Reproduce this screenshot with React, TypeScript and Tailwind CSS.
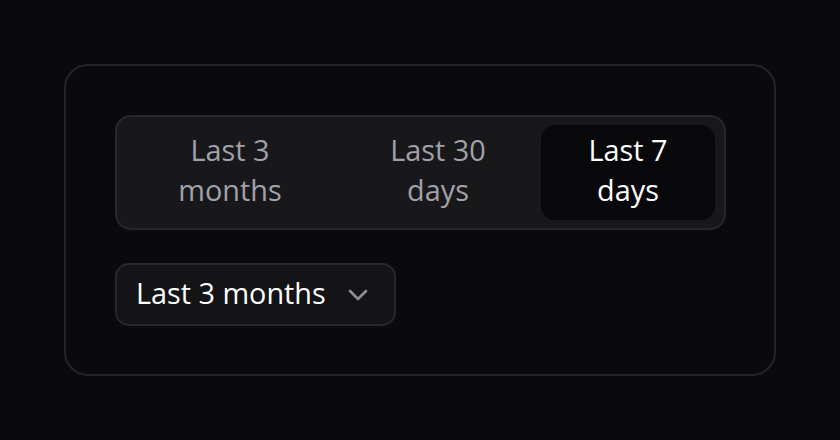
import { ChevronDown } from "lucide-react";

const tabs = [
  { label: "Last 3 months", width: "w-[210px]" },
  { label: "Last 30 days", width: "w-[206px]" },
  { label: "Last 7 days", width: "w-[174px]", active: true },
];

const App = () => {
  return (
    <div
      className="min-h-screen bg-[#0a0a0c] p-[64px]"
      style={{ fontFamily: '"Open Sans", "Noto Sans", sans-serif' }}
    >
      {/* Card */}
      <div className="h-[312px] w-[712px] rounded-[24px] border-2 border-[#242427] bg-[#0a0a0c] p-[49px]">
        {/* Tabs */}
        <div className="flex h-[115px] w-[611px] rounded-[16px] border-2 border-[#28282b] bg-[#18181b] p-[8px]">
          {tabs.map((t) => (
            <div
              key={t.label}
              className={`flex ${t.width} items-center justify-center rounded-[14px] px-8 pb-[6px] text-center text-[28.8px] leading-[40px] ${
                t.active ? "bg-[#09090b] text-white" : "text-[#a1a1aa]"
              }`}
            >
              {t.label}
            </div>
          ))}
        </div>

        {/* Select */}
        <div className="mt-[33px] flex h-[63px] w-[281px] items-center justify-between rounded-[14px] border-2 border-[#28282b] bg-[#141416] pb-[4px] pl-[19px] pr-[20px] text-[28.8px] text-white">
          <span>Last 3 months</span>
          <ChevronDown className="mt-[4px] h-[32px] w-[32px] text-[#8d8d92]" strokeWidth={2} />
        </div>
      </div>
    </div>
  );
};

export default App;
